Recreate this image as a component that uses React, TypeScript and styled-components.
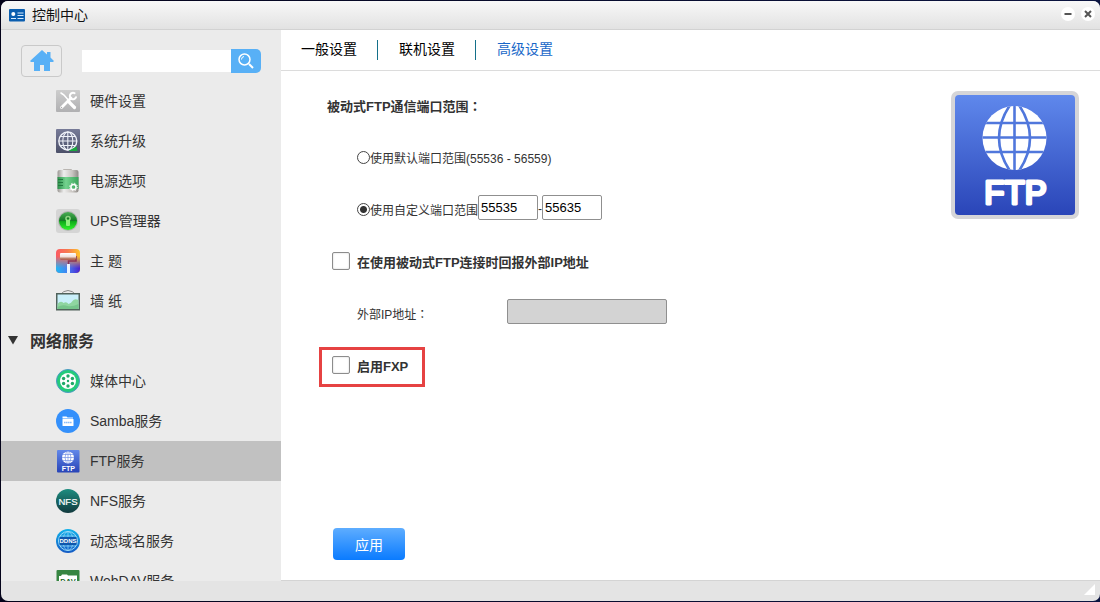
import React, { useState } from 'react';
import styled, { createGlobalStyle } from 'styled-components';

const GlobalStyle = createGlobalStyle`
  *, *::before, *::after { box-sizing: border-box; }
  body {
    margin: 0;
    background: linear-gradient(90deg, #04031a, #0b1440);
    font-family: 'Liberation Sans', 'Noto Sans CJK SC', sans-serif;
    font-size: 14px;
    color: #333;
  }
  button, input { font-family: inherit; margin: 0; }
`;

const Window = styled.div`
  display: flex;
  flex-direction: column;
  height: calc(100vh - 2px);
  margin: 1px 0 1px 1px;
  border-radius: 7px;
  overflow: hidden;
  background: #e4e4e4;
`;

const TitleBar = styled.header`
  display: flex;
  align-items: center;
  gap: 6px;
  flex: none;
  height: 29px;
  padding: 0 5px 0 8px;
  border-bottom: 1px solid #d2d2d2;
  background: linear-gradient(#f8f8f8, #e2e2e2);
`;

const WindowTitle = styled.h1`
  flex: 1;
  margin: 0;
  font-size: 14px;
  font-weight: 400;
  line-height: 28px;
  color: #111;
`;

const WindowButton = styled.button`
  display: flex;
  width: 14px;
  height: 14px;
  margin-bottom: 2px;
  padding: 0;
  border: 0;
  border-radius: 50%;
  background: #fff;
`;

const Body = styled.div`
  display: flex;
  flex: 1;
  min-height: 0;
`;

const Sidebar = styled.aside`
  flex: none;
  width: 280px;
  overflow: hidden;
  background: #ebebeb;
`;

const SearchBar = styled.form`
  display: flex;
  align-items: center;
  height: 51px;
  padding: 11px 20px 0;
`;

const HomeButton = styled.button`
  display: flex;
  align-items: center;
  justify-content: center;
  width: 41px;
  height: 32px;
  margin-right: 20px;
  padding: 0;
  border: 1px solid #c9c9c9;
  border-radius: 4px;
  background: #ececec;
`;

const SearchInput = styled.input`
  flex: 1;
  min-width: 0;
  height: 22px;
  padding: 0 6px;
  border: 0;
  background: #fff;
  outline: none;
`;

const SearchButton = styled.button`
  display: flex;
  align-items: center;
  justify-content: center;
  width: 30px;
  height: 24px;
  padding: 0;
  border: 0;
  border-radius: 0 5px 5px 0;
  background: #58b0f6;
`;

const NavLink = styled.a<{ $active?: boolean }>`
  display: flex;
  align-items: center;
  gap: 10px;
  height: 40px;
  padding-left: 55px;
  line-height: 20px;
  color: #333;
  text-decoration: none;
  background: ${(p) => (p.$active ? '#c1c1c1' : 'transparent')};
`;

const SectionButton = styled.button`
  display: flex;
  align-items: center;
  gap: 11px;
  width: 100%;
  height: 40px;
  padding: 0 7px 2px;
  border: 0;
  background: none;
  font-size: 16px;
  font-weight: 700;
  color: #333;
`;

const Main = styled.main`
  display: flex;
  flex-direction: column;
  flex: 1;
  min-width: 0;
  border-bottom: 1px solid #d4d4d4;
  background: #fff;
`;

const Tabs = styled.nav`
  display: flex;
  align-items: center;
  gap: 1px;
  flex: none;
  height: 41px;
  border-bottom: 1px solid #dcdcdc;
`;

const Tab = styled.button<{ $active: boolean }>`
  height: 20px;
  padding: 0 20px 2px;
  border: 0;
  border-right: 1px solid #14708a;
  background: none;
  font-size: 14px;
  line-height: 18px;
  color: ${(p) => (p.$active ? '#1867c8' : '#000')};
  &:last-child { border-right: 0; }
`;

const Content = styled.div`
  display: flex;
  align-items: stretch;
  justify-content: space-between;
  flex: 1;
  padding: 8px 21px 20px 38px;
`;

const Form = styled.form`
  display: flex;
  flex-direction: column;
  align-items: flex-start;
`;

const Row = styled.div<{ $indent: number }>`
  display: flex;
  align-items: center;
  height: 52px;
  padding-left: ${(p) => p.$indent}px;
  font-size: 12px;
  white-space: nowrap;
`;

const Heading = styled.h2`
  margin: 0;
  font-size: 13px;
  font-weight: 700;
`;

const Colon = styled.span`
  font-family: 'Noto Sans CJK TC', sans-serif;
`;

const RadioLabel = styled.label`
  display: flex;
  align-items: center;
`;

const Radio = styled.input`
  appearance: none;
  width: 13px;
  height: 13px;
  border: 1px solid #444;
  border-radius: 50%;
  background: #fff;
  &:checked {
    background: radial-gradient(circle, #333 0 3px, #fff 4px);
  }
`;

const CheckLabel = styled.label`
  display: flex;
  align-items: center;
  gap: 7px;
  font-size: 13px;
  font-weight: 700;
`;

const Check = styled.input`
  appearance: none;
  width: 18px;
  height: 18px;
  border: 1px solid #8c8c8c;
  border-radius: 2px;
  background: #fff;
  box-shadow: inset 0 0 2px #ccc;
  &:checked { background: #1867c8; }
`;

const Highlight = styled.div`
  display: flex;
  align-items: center;
  height: 40px;
  margin-top: 4px;
  padding: 0 14px 4px 10px;
  border: 3px solid #e64242;
`;

const TextField = styled.input<{ $wide?: boolean }>`
  width: ${(p) => (p.$wide ? 160 : 60)}px;
  height: 25px;
  margin-bottom: 4px;
  padding: 0 2px;
  border: 1px solid #8f8f8f;
  border-radius: 2px;
  background: #fff;
  font-size: 13px;
  color: #000;
  &:disabled { background: #d3d3d3; }
`;

const Dash = styled.span`
  width: 4px;
  text-align: center;
`;

const FieldLabel = styled.label`
  width: 150px;
`;

const ApplyButton = styled.button`
  width: 72px;
  height: 32px;
  margin: auto 0 0 14px;
  padding: 0;
  border: 0;
  border-radius: 4px;
  background: linear-gradient(#5eadff, #0a7bff);
  font-size: 14px;
  color: #fff;
`;

const PanelLogo = styled.div`
  padding-top: 12px;
`;

const Footer = styled.footer`
  display: flex;
  justify-content: flex-end;
  flex: none;
  height: 20px;
  padding: 3px 5px;
`;

const Block = styled.svg`
  display: block;
  flex: none;
`;

function NavIcon({ children }: { children: React.ReactNode }) {
  return <Block width="24" height="24" viewBox="0 0 24 24" aria-hidden="true">{children}</Block>;
}

const HardwareIcon = () => (
  <NavIcon>
    <defs><linearGradient id="hw" x2="0" y2="1"><stop stopColor="#cdcdcd" /><stop offset="1" stopColor="#b0b0b2" /></linearGradient></defs>
    <rect y="1" width="24" height="22" rx="1" fill="url(#hw)" />
    <g stroke="#fff" strokeLinecap="round" fill="none">
      <path d="M5 4l3 2 6 7" strokeWidth="1.6" />
      <path d="M13.500 13.500l5 5" strokeWidth="3.200" />
      <path d="M5.500 18.500L15 9" strokeWidth="2.800" />
      <path d="M18.500 4.200a3.200 3.200 0 1 0 1.500 4" strokeWidth="2" />
    </g>
    <circle cx="5.500" cy="18.500" r=".7" fill="#aaa" />
  </NavIcon>
);

const UpgradeIcon = () => (
  <NavIcon>
    <defs><linearGradient id="up" x2="0" y2="1"><stop stopColor="#777b98" /><stop offset="1" stopColor="#4c5069" /></linearGradient></defs>
    <rect width="24" height="24" rx="1" fill="url(#up)" />
    <g fill="none" stroke="#eef0f8" strokeWidth="1.100">
      <circle cx="11.800" cy="12" r="9" strokeWidth="1.400" />
      <ellipse cx="11.800" cy="12" rx="5" ry="9" />
      <path d="M11.800 3v18M3 12h18M4 7.500h15.600M4 16.500h15.600" />
    </g>
    <path d="M13 21.500l7.500-4 1 4.500h-8z" fill="#18a83d" />
  </NavIcon>
);

const PowerIcon = () => (
  <NavIcon>
    <defs>
      <linearGradient id="pwm"><stop stopColor="#9b9793" /><stop offset=".3" stopColor="#eee" /><stop offset=".7" stopColor="#c9c5c1" /><stop offset="1" stopColor="#8f8b87" /></linearGradient>
      <linearGradient id="pwg"><stop stopColor="#2b8f4b" /><stop offset=".4" stopColor="#74d38e" /><stop offset="1" stopColor="#3aa45a" /></linearGradient>
    </defs>
    <rect x="7" width="9" height="3" rx="1" fill="#b9b5b1" />
    <rect x="1.500" y="1" width="21" height="22.500" rx="2" fill="url(#pwm)" />
    <rect x="1.500" y="8" width="21" height="12" fill="url(#pwg)" />
    <path d="M2 10.500h5M2 13.500h5M2 16.500h5" stroke="#237a3f" strokeWidth="1" />
    <circle cx="17.500" cy="18" r="2.600" fill="none" stroke="#fff" strokeWidth="1.500" />
    <circle cx="17.500" cy="18" r="3.800" fill="none" stroke="#fff" strokeWidth="1" strokeDasharray="1.500 1.480" />
  </NavIcon>
);

const UpsIcon = () => (
  <NavIcon>
    <defs><linearGradient id="us" x2="0" y2="1"><stop stopColor="#4cae55" /><stop offset=".48" stopColor="#147c24" /><stop offset=".5" stopColor="#0da51a" /><stop offset="1" stopColor="#30f52a" /></linearGradient></defs>
    <rect width="24" height="24" rx="3" fill="#d5d5d5" />
    <circle cx="12" cy="12" r="10" fill="#b3b7b3" />
    <circle cx="12" cy="12" r="9" fill="url(#us)" />
    <circle cx="12" cy="9.500" r="2.800" fill="#8ed482" />
    <rect x="10" y="10" width="4" height="7" rx="1" fill="#8df07c" />
    <circle cx="12" cy="9.500" r="1.200" fill="#187f24" />
  </NavIcon>
);

const ThemeIcon = () => (
  <NavIcon>
    <defs>
      <linearGradient id="th" x2="1" y2="0"><stop stopColor="#fb5a63" /><stop offset=".5" stopColor="#f77b4e" /><stop offset="1" stopColor="#ffc629" /></linearGradient>
      <linearGradient id="tb"><stop stopColor="#22b8f4" /><stop offset=".5" stopColor="#467df0" /><stop offset="1" stopColor="#4b21cf" /></linearGradient>
      <linearGradient id="tf" x2="0" y2="1"><stop offset=".3" stopColor="#000" /><stop offset=".8" stopColor="#fff" /></linearGradient>
      <linearGradient id="tr" x2="0" y2="1"><stop stopColor="#fff" /><stop offset=".55" stopColor="#f1dfd8" /><stop offset="1" stopColor="#9d4c2f" /></linearGradient>
      <mask id="tm"><rect width="24" height="24" fill="url(#tf)" /></mask>
    </defs>
    <rect width="24" height="24" rx="4" fill="url(#th)" />
    <rect width="24" height="24" rx="4" fill="url(#tb)" mask="url(#tm)" />
    <path d="M20 7v5h-7.500v3" fill="none" stroke="#8b3454" strokeWidth="1.500" />
    <rect x="4" y="4" width="16" height="6.500" rx="1" fill="url(#tr)" />
    <rect x="11" y="15" width="3" height="9" fill="#eaf4ff" />
  </NavIcon>
);

const WallpaperIcon = () => (
  <NavIcon>
    <path d="M5 5q2-3 7-3.500 5 .5 7 3.500" fill="none" stroke="#8a8a8a" />
    <rect x=".75" y="4.750" width="22.500" height="16" fill="#c9effa" stroke="#50625b" strokeWidth="1.500" />
    <path d="M1.500 20v-5q3-4 6-1 3-2 5 1 3-1 4-3 2-3 6-1v9z" fill="#8fd5a0" />
    <path d="M1.500 20v-2q5-3 10-1 5 1 11-2v5z" fill="#76c58b" />
  </NavIcon>
);

const MediaIcon = () => (
  <NavIcon>
    <circle cx="12" cy="12" r="11.500" fill="#23cb7b" stroke="#4c99c4" />
    <circle cx="12" cy="12" r="8" fill="#fff" />
    <g fill="#1fa968">
      <circle cx="12" cy="12" r="1.200" />
      <circle cx="12" cy="7" r="1.700" /><circle cx="12" cy="17" r="1.700" />
      <circle cx="7.600" cy="9.500" r="1.700" /><circle cx="16.400" cy="9.500" r="1.700" />
      <circle cx="7.600" cy="14.500" r="1.700" /><circle cx="16.400" cy="14.500" r="1.700" />
    </g>
  </NavIcon>
);

const SambaIcon = () => (
  <NavIcon>
    <circle cx="12" cy="12" r="12" fill="#3490fb" />
    <path d="M6.500 7.500h4l1 1h5.500v1h-10.500z" fill="#fff" />
    <rect x="6.500" y="10" width="11" height="7" rx=".5" fill="#fff" />
    <path d="M8 13.500h8" stroke="#8abcf8" strokeWidth="1.500" strokeDasharray="1.500 .4" />
  </NavIcon>
);

const FtpIcon = () => (
  <NavIcon>
    <defs><linearGradient id="fs" x2="0" y2="1"><stop stopColor="#6288e9" /><stop offset="1" stopColor="#2743b7" /></linearGradient></defs>
    <rect x="1" y="1" width="22.500" height="22.500" rx="1" fill="url(#fs)" />
    <circle cx="12" cy="8.500" r="6" fill="#fff" />
    <path d="M12 2.500v12M6 8.500h12M7 5.500h10M7 11.500h10M10.500 2.500q-3 6 0 12M13.500 2.500q3 6 0 12" stroke="#6183e0" strokeWidth=".6" fill="none" />
    <text x="12.300" y="22" textAnchor="middle" fontSize="7" fontWeight="700" fill="#fff">FTP</text>
  </NavIcon>
);

const NfsIcon = () => (
  <NavIcon>
    <defs><linearGradient id="nf" x2="0" y2="1"><stop stopColor="#1d8d80" /><stop offset="1" stopColor="#123a3e" /></linearGradient></defs>
    <circle cx="12" cy="12" r="12" fill="url(#nf)" />
    <text x="12" y="15.500" textAnchor="middle" fontSize="9.500" fill="#fff" stroke="#fff" strokeWidth=".2">NFS</text>
  </NavIcon>
);

const DdnsIcon = () => (
  <NavIcon>
    <defs><linearGradient id="dd" x2="0" y2="1"><stop stopColor="#12b3ea" /><stop offset="1" stopColor="#145ac5" /></linearGradient></defs>
    <circle cx="12" cy="12" r="12" fill="url(#dd)" />
    <g fill="none" stroke="#9bdaf8" strokeWidth=".7">
      <circle cx="12" cy="12" r="9.500" strokeWidth="1" />
      <ellipse cx="12" cy="12" rx="5" ry="9.500" />
      <path d="M12 2.500v19M4 7h16M4 17h16" />
    </g>
    <rect x="3.500" y="8" width="17" height="8" rx="1" fill="#0e57ad" />
    <text x="12" y="14.300" textAnchor="middle" fontSize="6" fontWeight="700" fill="#fff">DDNS</text>
  </NavIcon>
);

const WebdavIcon = () => (
  <NavIcon>
    <rect x=".5" y="1" width="23" height="23" rx="1" fill="#378542" />
    <path d="M3 7h2l1-1.500h5l1 1h9v15h-18z" fill="#fff" />
    <text x="12" y="15" textAnchor="middle" fontSize="7.500" fontWeight="700" fill="#22652c">DAV</text>
  </NavIcon>
);

const FtpLogo = () => (
  <Block width="128" height="128" viewBox="0 0 128 128" role="img" aria-label="FTP">
    <defs>
      <linearGradient id="fl" x2="0" y2="1"><stop stopColor="#5f88ec" /><stop offset="1" stopColor="#2a45b8" /></linearGradient>
      <clipPath id="globe"><circle cx="63.500" cy="47" r="32" /></clipPath>
    </defs>
    <rect width="128" height="128" rx="7" fill="#d5d5d8" />
    <rect x="4" y="4" width="120" height="120" rx="4" fill="url(#fl)" />
    <circle cx="63.500" cy="47" r="32" fill="#fff" />
    <g clipPath="url(#globe)" stroke="#5077dc" strokeWidth="2.600" fill="none">
      <path d="M63.500 14v66M30 32h68M30 46.500h68M30 61h68" />
      <path d="M59 14Q37 47 59 80M68 14Q90 47 68 80" />
    </g>
    <text x="64.500" y="113" textAnchor="middle" fontSize="33" fill="#fff" stroke="#fff" strokeWidth="3" strokeLinejoin="round">FTP</text>
  </Block>
);

const systemItems = [
  { label: '硬件设置', Icon: HardwareIcon },
  { label: '系统升级', Icon: UpgradeIcon },
  { label: '电源选项', Icon: PowerIcon },
  { label: 'UPS管理器', Icon: UpsIcon },
  { label: '主 题', Icon: ThemeIcon },
  { label: '墙 纸', Icon: WallpaperIcon },
];

const networkItems = [
  { label: '媒体中心', Icon: MediaIcon },
  { label: 'Samba服务', Icon: SambaIcon },
  { label: 'FTP服务', Icon: FtpIcon },
  { label: 'NFS服务', Icon: NfsIcon },
  { label: '动态域名服务', Icon: DdnsIcon },
  { label: 'WebDAV服务', Icon: WebdavIcon },
];

const tabs = ['一般设置', '联机设置', '高级设置'];

export default function App() {
  const [tab, setTab] = useState('高级设置');
  const [range, setRange] = useState('custom');
  const [active, setActive] = useState('FTP服务');

  const renderItem = ({ label, Icon }: { label: string; Icon: React.ComponentType }) => (
    <NavLink key={label} href="#" $active={label === active} onClick={() => setActive(label)}>
      <Icon />
      {label}
    </NavLink>
  );

  return (
    <>
      <GlobalStyle />
      <Window>
        <TitleBar>
          <Block width="17" height="13" viewBox="0 0 17 13" aria-hidden="true">
            <rect y="0" width="16" height="12.500" rx="1" fill="#0b5eaf" />
            <circle cx="4.300" cy="5" r="2" fill="#fff" />
            <path d="M8.500 4h6M8.500 6.500h6M8.500 9.500h6M2 9.500h5" stroke="#d8ecff" strokeWidth="1" />
          </Block>
          <WindowTitle>控制中心</WindowTitle>
          <WindowButton type="button" aria-label="最小化">
            <Block width="14" height="14" viewBox="0 0 14 14"><path d="M3.500 7h7" stroke="#555" strokeWidth="2" /></Block>
          </WindowButton>
          <WindowButton type="button" aria-label="关闭">
            <Block width="14" height="14" viewBox="0 0 14 14"><path d="M4 4l6 6M10 4l-6 6" stroke="#555" strokeWidth="2" /></Block>
          </WindowButton>
        </TitleBar>
        <Body>
          <Sidebar>
            <SearchBar onSubmit={(e) => e.preventDefault()}>
              <HomeButton type="button" aria-label="主页">
                <Block width="24" height="22" viewBox="0 0 24 22">
                  <path d="M12 0l5 4.500V2h3.500v5.500L24 11l-1 1h-3v9h-6v-6h-4v6H4v-9H1l-1-1z" fill="#58b0f6" />
                </Block>
              </HomeButton>
              <SearchInput type="text" aria-label="搜索" />
              <SearchButton type="submit" aria-label="搜索">
                <Block width="16" height="16" viewBox="0 0 16 16" fill="none" stroke="#fff">
                  <circle cx="6.500" cy="6.500" r="5.500" strokeWidth="1.500" />
                  <path d="M3.500 6.500a3 3 0 0 1 2.500-3" strokeWidth="1" />
                  <path d="M11 11l4 4" strokeWidth="2" />
                </Block>
              </SearchButton>
            </SearchBar>
            <nav>
              {systemItems.map(renderItem)}
              <SectionButton type="button" aria-expanded="true">
                <Block width="11" height="9" viewBox="0 0 11 9" aria-hidden="true"><path d="M0 0h10L5 8.500z" fill="#333" /></Block>
                网络服务
              </SectionButton>
              {networkItems.map(renderItem)}
            </nav>
          </Sidebar>
          <Main>
            <Tabs>
              {tabs.map((name) => (
                <Tab key={name} type="button" $active={name === tab} onClick={() => setTab(name)}>{name}</Tab>
              ))}
            </Tabs>
            <Content>
              <Form onSubmit={(e) => e.preventDefault()}>
                <Row $indent={8}><Heading>被动式FTP通信端口范围<Colon>：</Colon></Heading></Row>
                <Row $indent={38}>
                  <RadioLabel>
                    <Radio type="radio" name="range" checked={range === 'default'} onChange={() => setRange('default')} />
                    使用默认端口范围(55536 - 56559)
                  </RadioLabel>
                </Row>
                <Row $indent={38}>
                  <RadioLabel>
                    <Radio type="radio" name="range" checked={range === 'custom'} onChange={() => setRange('custom')} />
                    使用自定义端口范围
                  </RadioLabel>
                  <TextField type="text" aria-label="起始端口" defaultValue="55535" />
                  <Dash>-</Dash>
                  <TextField type="text" aria-label="结束端口" defaultValue="55635" />
                </Row>
                <Row $indent={13}>
                  <CheckLabel><Check type="checkbox" />在使用被动式FTP连接时回报外部IP地址</CheckLabel>
                </Row>
                <Row $indent={38}>
                  <FieldLabel htmlFor="external-ip">外部IP地址<Colon>：</Colon></FieldLabel>
                  <TextField id="external-ip" type="text" $wide disabled />
                </Row>
                <Row $indent={0}>
                  <Highlight><CheckLabel><Check type="checkbox" />启用FXP</CheckLabel></Highlight>
                </Row>
                <ApplyButton type="submit">应用</ApplyButton>
              </Form>
              <PanelLogo><FtpLogo /></PanelLogo>
            </Content>
          </Main>
        </Body>
        <Footer>
          <Block width="11" height="11" viewBox="0 0 11 11" aria-hidden="true"><path d="M11 0v11H0z" fill="#fff" /></Block>
        </Footer>
      </Window>
    </>
  );
}
